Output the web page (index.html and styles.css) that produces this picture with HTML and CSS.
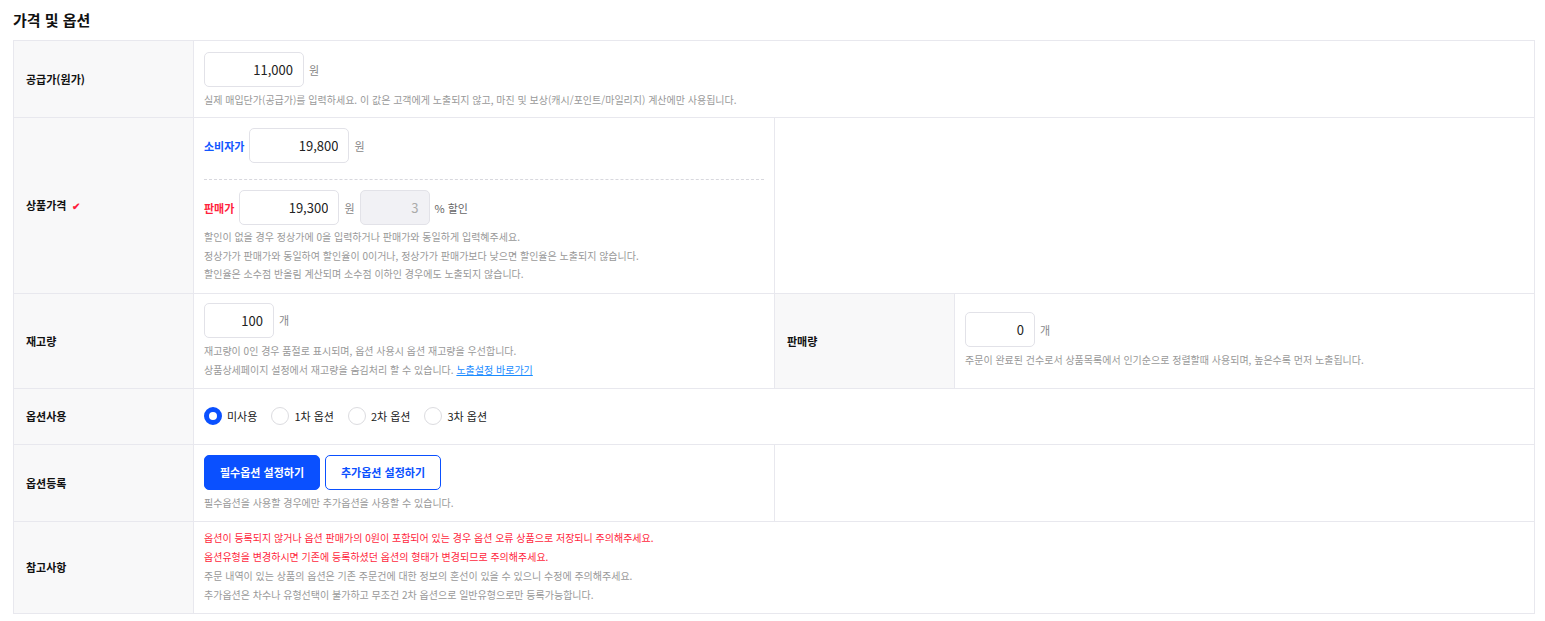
FILE: index.html
```
<!DOCTYPE html>
<html lang="ko">

<head>
    <meta charset="UTF-8">
    <link rel="stylesheet" href="styles.css">
    <title>가격 및 옵션</title>
</head>

<body>
    <div id="wrapper">
        <h2 class="section-title">가격 및 옵션</h2>
        <table class="form-table">
            <colgroup>
                <col class="col-label">
                <col class="col-field">
                <col class="col-label">
                <col>
            </colgroup>
            <tr class="row-supply">
                <th>공급가(원가)</th>
                <td colspan="3">
                    <div class="line">
                        <input type="text" class="num" value="11,000">
                        <span class="unit">원</span>
                    </div>
                    <p class="help">실제 매입단가(공급가)를 입력하세요. 이 값은 고객에게 노출되지 않고, 마진 및 보상(캐시/포인트/마일리지) 계산에만 사용됩니다.</p>
                </td>
            </tr>
            <tr class="row-price">
                <th>상품가격 <span class="check">✔</span></th>
                <td>
                    <div class="line">
                        <span class="tag tag-blue">소비자가</span>
                        <input type="text" class="num" value="19,800">
                        <span class="unit">원</span>
                    </div>
                    <div class="dashed"></div>
                    <div class="line">
                        <span class="tag tag-red">판매가</span>
                        <input type="text" class="num" value="19,300">
                        <span class="unit">원</span>
                        <input type="text" class="num num-rate" value="3" disabled>
                        <span class="unit unit-dark">% 할인</span>
                    </div>
                    <p class="help">할인이 없을 경우 정상가에 0을 입력하거나 판매가와 동일하게 입력혜주세요.</p>
                    <p class="help">정상가가 판매가와 동일하여 할인율이 0이거나, 정상가가 판매가보다 낮으면 할인율은 노출되지 않습니다.</p>
                    <p class="help">할인율은 소수점 반올림 계산되며 소수점 이하인 경우에도 노출되지 않습니다.</p>
                </td>
                <td colspan="2"></td>
            </tr>
            <tr class="row-stock">
                <th>재고량</th>
                <td>
                    <div class="line">
                        <input type="text" class="num num-small" value="100">
                        <span class="unit">개</span>
                    </div>
                    <p class="help">재고량이 0인 경우 품절로 표시되며, 옵션 사용시 옵션 재고량을 우선합니다.</p>
                    <p class="help">상품상세페이지 설정에서 재고량을 숨김처리 할 수 있습니다. <a href="#" class="link">노출설정 바로가기</a></p>
                </td>
                <th>판매량</th>
                <td>
                    <div class="line">
                        <input type="text" class="num num-small" value="0">
                        <span class="unit">개</span>
                    </div>
                    <p class="help">주문이 완료된 건수로서 상품목록에서 인기순으로 정렬할때 사용되며, 높은수록 먼저 노출됩니다.</p>
                </td>
            </tr>
            <tr class="row-option">
                <th>옵션사용</th>
                <td colspan="3">
                    <div class="radios">
                        <label class="radio"><input type="radio" name="opt" checked><span class="dot"></span>미사용</label>
                        <label class="radio"><input type="radio" name="opt"><span class="dot"></span>1차 옵션</label>
                        <label class="radio"><input type="radio" name="opt"><span class="dot"></span>2차 옵션</label>
                        <label class="radio"><input type="radio" name="opt"><span class="dot"></span>3차 옵션</label>
                    </div>
                </td>
            </tr>
            <tr class="row-register">
                <th>옵션등록</th>
                <td>
                    <div class="line">
                        <button class="btn btn-primary">필수옵션 설정하기</button>
                        <button class="btn btn-outline">추가옵션 설정하기</button>
                    </div>
                    <p class="help">필수옵션을 사용할 경우에만 추가옵션을 사용할 수 있습니다.</p>
                </td>
                <td colspan="2"></td>
            </tr>
            <tr class="row-note">
                <th>참고사항</th>
                <td colspan="3">
                    <p class="help help-red">옵션이 등록되지 않거나 옵션 판매가의 0원이 포함되어 있는 경우 옵션 오류 상품으로 저장되니 주의해주세요.</p>
                    <p class="help help-red">옵션유형을 변경하시면 기존에 등록하셨던 옵션의 형태가 변경되므로 주의해주세요.</p>
                    <p class="help">주문 내역이 있는 상품의 옵션은 기존 주문건에 대한 정보의 혼선이 있을 수 있으니 수정에 주의해주세요.</p>
                    <p class="help">추가옵션은 차수나 유형선택이 불가하고 무조건 2차 옵션으로 일반유형으로만 등록가능합니다.</p>
                </td>
            </tr>
        </table>
    </div>
</body>

</html>
```

FILE: styles.css
```
body {
    margin: 0;
    background-color: #fff;
    color: #222;
    font-family: "Noto Sans CJK KR", "Noto Sans", sans-serif;
    font-size: 12px;
}

button,
input {
    font-family: inherit;
    font-size: 100%;
    margin: 0;
}

#wrapper {
    padding: 0 10px 0 13px;
}

.section-title {
    margin: 0;
    height: 40px;
    line-height: 40px;
    font-size: 15px;
    font-weight: 700;
    color: #111;
}

.form-table {
    width: 1522px;
    border-collapse: collapse;
    table-layout: fixed;
}

.col-label {
    width: 180px;
}

.col-field {
    width: 581px;
}

.form-table th,
.form-table td {
    border: 1px solid #e8e8ee;
    vertical-align: middle;
}

.form-table th {
    padding: 0 12px;
    background-color: #f8f8f9;
    text-align: left;
    font-weight: 700;
    font-size: 11px;
    color: #111;
}

.form-table td {
    padding: 10px;
}

.line {
    display: flex;
    align-items: center;
    gap: 5px;
}

.num {
    width: 100px;
    height: 35px;
    box-sizing: border-box;
    padding: 0 10px;
    border: 1px solid #e2e2e8;
    border-radius: 5px;
    background-color: #fff;
    color: #222;
    text-align: right;
    font-size: 13px;
}

.num-small {
    width: 70px;
}

.num-rate {
    width: 70px;
    margin-left: 0;
    background-color: #f1f1f5;
    color: #aaa;
}

.unit {
    color: #888;
    font-size: 11px;
}

.unit-dark {
    color: #666;
}

.tag {
    font-weight: 700;
    font-size: 11px;
}

.tag-blue {
    color: #1257ff;
}

.tag-red {
    color: #ff1f3d;
}

.check {
    color: #ff1f3d;
    font-size: 10px;
    margin-left: 2px;
}

.dashed {
    margin: 16px 0 10px;
    border-top: 1px dashed #d8d8de;
}

.help {
    margin: 0;
    color: #999;
    font-size: 10px;
    line-height: 19px;
}

.line + .help {
    margin-top: 3px;
}

.help-red {
    color: #ff1f3d;
}

.link {
    color: #1a8cff;
    text-decoration: underline;
}

.row-supply td {
    padding-top: 11px;
    padding-bottom: 8px;
}

.row-price td {
    padding-bottom: 9px;
}

.row-price .help {
    line-height: 18.5px;
}

.row-stock td {
    padding-top: 9px;
    padding-bottom: 9px;
}

.row-option td {
    height: 35px;
}

.radios {
    display: flex;
    align-items: center;
    gap: 14px;
}

.radio {
    display: flex;
    align-items: center;
    gap: 5px;
    font-size: 11px;
    color: #222;
}

.radio input {
    display: none;
}

.dot {
    width: 18px;
    height: 18px;
    box-sizing: border-box;
    border: 1px solid #dcdce0;
    border-radius: 50%;
    background-color: #fff;
}

.radio input:checked + .dot {
    border: 5px solid #0a50ff;
    background-color: #fff;
}

.btn {
    width: 116px;
    height: 35px;
    border-radius: 5px;
    font-weight: 700;
    font-size: 11px;
    cursor: pointer;
}

.btn-primary {
    border: 1px solid #0a50ff;
    background-color: #0a50ff;
    color: #fff;
}

.btn-outline {
    border: 1px solid #0a50ff;
    background-color: #fff;
    color: #0a50ff;
}

.row-register td {
    padding-bottom: 9px;
}

.row-note td {
    padding-top: 6px;
    padding-bottom: 9px;
}
```
